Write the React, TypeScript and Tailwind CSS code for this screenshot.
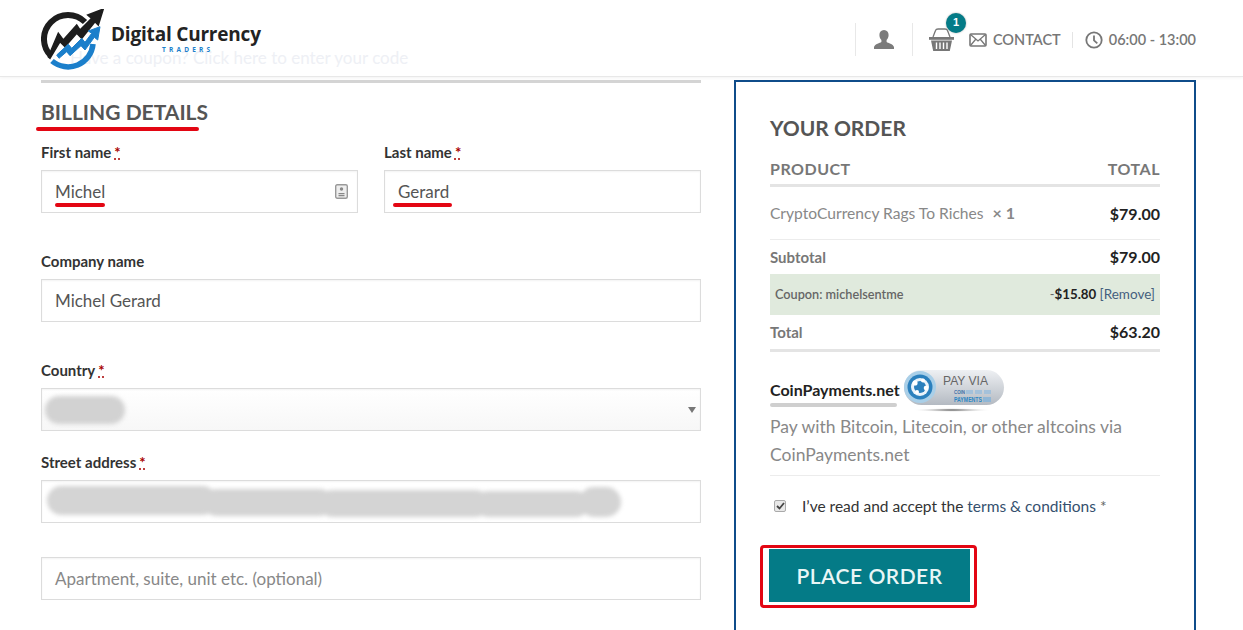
import type { ReactNode } from "react";

function Logo() {
  return (
    <div className="relative z-10 flex items-start">
      <svg width="64" height="62" viewBox="0 0 64 62" className="mt-[9px] shrink-0">
        <path d="M10 47 A24 24 0 0 1 44 13" fill="none" stroke="#1d1d1d" strokeWidth="6" />
        <path d="M7.300 47.700 17.300 24.300 22.300 31 35.700 16 39 21 50.700 9.300 46.700 6 62.300 0 57.300 16 54 12.700 40.700 29.300 35.700 24.300 24 37.700 19 32.700 9 49.300Z" fill="#1d1d1d" stroke="#1d1d1d" strokeWidth="1.500" />
        <path d="M11 52 A25 25 0 0 0 52 35" fill="none" stroke="#1b7fcb" strokeWidth="5.500" />
        <path d="M15.700 46 27.300 35.300 30.700 39.300 40.700 29.300 44 33.300 50.700 24.300 47.300 22 59 17.700 56.700 31 53.300 28.300 44 41 40 36.700 29 46.700 25.700 42.700 18 49.300Z" fill="#1b7fcb" stroke="#1b7fcb" strokeWidth="1" />
      </svg>
      <div className="ml-[6px] mt-[22px] flex flex-col">
        <span className="font-['Open_Sans',sans-serif] text-[19px] leading-[25px] font-bold tracking-[-0.2px] text-[#232323]">
          Digital Currency
        </span>
        <span className="ml-[51px] -mt-[1px] font-['Open_Sans',sans-serif] text-[6.500px] leading-[7px] font-bold tracking-[3.200px] text-[#1b7fcb]">
          TRADERS
        </span>
      </div>
    </div>
  );
}

function HeaderIcons() {
  return (
    <div className="flex items-center text-[#777]">
      <div className="h-[33px] w-px bg-[#e8e8e8]" />
      <svg width="20" height="19" viewBox="0 0 20 19" className="ml-[18px]">
        <path d="M10 0c3 0 4.600 2.200 4.600 5 0 2.200-.9 4-2 5v2c1.500 1 6.400 2 7.400 5v2H0v-2c1-3 5.900-4 7.400-5v-2c-1.100-1-2-2.800-2-5C5.400 2.200 7 0 10 0z" fill="#7b7b7b" />
      </svg>
      <div className="ml-[18px] h-[33px] w-px bg-[#e8e8e8]" />
      <div className="relative ml-[16px] h-[24px] w-[25px]">
        <svg width="25" height="24" viewBox="0 0 25 24">
          <path d="M4 9 L6.500 2.500 Q7 1 9 1 H16 Q18 1 18.500 2.500 L21 9" fill="none" stroke="#777" strokeWidth="1.300" />
          <path d="M0 9h25v2.800H0z" fill="#777" />
          <path d="M2 12.500h21L20.800 23H4.200z" fill="#777" />
          <path d="M7.500 14.500v6.500M11 14.500v6.500M14.500 14.500v6.500M18 14.500v6.500" stroke="#fff" strokeWidth="1.400" />
        </svg>
        <span className="absolute -top-[15px] left-[17px] flex h-[20px] w-[20px] items-center justify-center rounded-full bg-[#047b87] font-['Liberation_Sans',sans-serif] text-[11px] font-bold text-white shadow-[0_0_2px_rgba(0,0,0,0.35)]">
          1
        </span>
      </div>
      <svg width="18" height="14" viewBox="0 0 18 14" className="ml-[15px]">
        <rect x="1" y="1" width="16" height="12" rx="1" fill="none" stroke="#777" strokeWidth="1.600" />
        <path d="M1.500 1.500 9 8l7.500-6.500M1.500 12.500 6.500 6.500M16.500 12.500 11.500 6.500" fill="none" stroke="#777" strokeWidth="1.300" />
      </svg>
      <span className="ml-[6px] text-[14.500px] font-semibold text-[#777]">CONTACT</span>
      <div className="ml-[11px] h-[16px] w-px bg-[#e4e4e4]" />
      <svg width="18" height="18" viewBox="0 0 18 18" className="ml-[12px]">
        <circle cx="9" cy="9" r="7.700" fill="none" stroke="#777" strokeWidth="1.800" />
        <path d="M9 4.500V9.300l3.300 3" fill="none" stroke="#777" strokeWidth="1.800" />
      </svg>
      <span className="ml-[6px] text-[14.500px] font-semibold text-[#777]">06:00 - 13:00</span>
    </div>
  );
}

function Req() {
  return <span className="ml-[3px] font-bold text-[#a80000] underline decoration-dotted">*</span>;
}

function Field({
  label,
  required,
  className,
  boxClass,
  children,
}: {
  label?: string;
  required?: boolean;
  className?: string;
  boxClass?: string;
  children: ReactNode;
}) {
  return (
    <div className={className}>
      {label && (
        <div className="h-[28px] text-[15px] leading-[20px] font-bold text-[#333]">
          {label}
          {required && <Req />}
        </div>
      )}
      <div
        className={`relative flex h-[43px] items-center border border-[#dcdcdc] px-[13px] text-[17px] text-[#555] shadow-[inset_0_1px_2px_rgba(0,0,0,0.05)] ${boxClass ?? ""}`}
      >
        {children}
      </div>
    </div>
  );
}

function Underlined({ text, width }: { text: string; width: string }) {
  return (
    <span className="relative">
      {text}
      <span className={`absolute top-[24px] h-[4px] rounded-full bg-[#e30613] ${width}`} />
    </span>
  );
}

function Billing() {
  return (
    <section className="w-[660px] shrink-0 pt-[3px]">
      <div className="h-[3px] bg-[#d4d4d4]" />
      <h2 className="relative mt-[14px] text-[21px] leading-[30px] font-bold text-[#555]">
        BILLING DETAILS
        <span className="absolute top-[30px] -left-[5px] h-[4px] w-[163px] rounded-full bg-[#e30613]" />
      </h2>
      <div className="mt-[15px] flex gap-[26px]">
        <Field label="First name" required className="w-[317px]">
          <Underlined text="Michel" width="left-0 w-[50px]" />
          <svg width="13" height="15" viewBox="0 0 13 15" className="ml-auto -mr-[4px]">
            <rect x="0.700" y="0.700" width="11.600" height="13.600" rx="1.500" fill="#eee" stroke="#999" strokeWidth="1.400" />
            <circle cx="6.500" cy="5" r="1.700" fill="#888" />
            <path d="M3.500 9h6v1.200h-6zM3.500 11h6v1.200h-6z" fill="#888" />
          </svg>
        </Field>
        <Field label="Last name" required className="w-[317px]">
          <Underlined text="Gerard" width="-left-[5px] w-[59px]" />
        </Field>
      </div>
      <Field label="Company name" className="mt-[38px]">
        Michel Gerard
      </Field>
      <Field label="Country" required className="mt-[38px]" boxClass="bg-gradient-to-b from-white to-[#f7f7f7]">
        <span className="-ml-[10px] h-[28px] w-[80px] rounded-full bg-[#d2d2d2] blur-[2px]" />
        <span className="ml-auto -mr-[9px] border-x-[4px] border-t-[6px] border-x-transparent border-t-[#777]" />
      </Field>
      <Field label="Street address" required className="mt-[21px]">
        <span className="-ml-[8px] flex items-center blur-[2px]">
          <span className="mb-[3px] h-[29px] w-[170px] rounded-full bg-[#d4d4d4]" />
          <span className="-ml-[14px] mt-[1px] h-[27px] w-[130px] rounded-full bg-[#d4d4d4]" />
          <span className="-ml-[14px] mt-[3px] h-[27px] w-[170px] rounded-full bg-[#d4d4d4]" />
          <span className="-ml-[14px] mt-[4px] h-[26px] w-[114px] rounded-full bg-[#d4d4d4]" />
          <span className="-ml-[10px] h-[30px] w-[42px] rounded-full bg-[#d4d4d4]" />
        </span>
      </Field>
      <Field className="mt-[34px]">
        <span className="text-[#888]">Apartment, suite, unit etc. (optional)</span>
      </Field>
    </section>
  );
}

function PayBadge() {
  return (
    <svg width="102" height="44" viewBox="0 0 102 44" className="ml-[3px] -mt-[2px] shrink-0">
      <defs>
        <linearGradient id="pill" x1="0" y1="0" x2="0" y2="1">
          <stop offset="0" stopColor="#eef0f3" />
          <stop offset="1" stopColor="#b4bac2" />
        </linearGradient>
        <radialGradient id="shadow">
          <stop offset="0" stopColor="#444" />
          <stop offset="1" stopColor="#fff" stopOpacity="0" />
        </radialGradient>
      </defs>
      <rect x="1" y="1" width="100" height="35" rx="17.500" fill="url(#pill)" />
      <circle cx="17" cy="18" r="16" fill="#a9cfe8" />
      <circle cx="17" cy="18" r="12.500" fill="#2b80bd" />
      <circle cx="17" cy="18" r="9" fill="#eaf3fa" />
      <circle cx="17" cy="18" r="6" fill="#2b80bd" />
      <circle cx="12" cy="14" r="2.600" fill="#fff" />
      <circle cx="20" cy="11.500" r="2" fill="#fff" />
      <circle cx="23" cy="19" r="2.300" fill="#fff" />
      <circle cx="14" cy="23" r="2" fill="#fff" />
      <text x="40" y="16" fontFamily="Liberation Sans, sans-serif" fontSize="13" fill="#666" textLength="45" lengthAdjust="spacingAndGlyphs">PAY VIA</text>
      <text x="51" y="24.500" fontFamily="Liberation Sans, sans-serif" fontSize="6" fontWeight="700" fill="#3f6fa6" textLength="11" lengthAdjust="spacingAndGlyphs">COIN</text>
      <text x="51" y="33" fontFamily="Liberation Sans, sans-serif" fontSize="7" fontWeight="700" fill="#2b86c4" textLength="28" lengthAdjust="spacingAndGlyphs">PAYMENTS</text>
      <path d="M63 21h7v4h-7zM72 21h7v4h-7zM81 21h7v4h-7z" fill="#a4c1da" />
      <path d="M80 28h8v5h-8z" fill="#8fb6d6" />
      <ellipse cx="49" cy="41" rx="40" ry="2" fill="url(#shadow)" />
    </svg>
  );
}

function Order() {
  return (
    <aside className="h-[560px] w-[462px] shrink-0 border-2 border-b-0 border-[#0f4c8a] px-[34px] pt-[31px]">
      <h3 className="text-[21px] leading-[30px] font-bold text-[#555]">YOUR ORDER</h3>
      <div className="mt-[15px] flex h-[29px] justify-between border-b-[3px] border-[#e4e4e4] text-[16px] leading-[22px] font-bold tracking-[0.5px] text-[#777]">
        <span>PRODUCT</span>
        <span>TOTAL</span>
      </div>
      <div className="flex h-[53px] items-center justify-between border-b border-[#ececec] pt-[1px] text-[15.600px] text-[#888]">
        <span>
          CryptoCurrency Rags To Riches <span className="ml-[5px] text-[16px] font-bold">× 1</span>
        </span>
        <span className="text-[16px] font-bold text-[#222]">$79.00</span>
      </div>
      <div className="flex h-[34px] items-center justify-between text-[15px] font-bold text-[#777]">
        <span>Subtotal</span>
        <span className="text-[16px] text-[#222]">$79.00</span>
      </div>
      <div className="flex h-[41px] items-center justify-between bg-[#e0eadd] px-[5px] text-[12.700px] text-[#666]">
        <span className="font-semibold">Coupon: michelsentme</span>
        <span>
          -<span className="text-[13.300px] font-bold text-[#222]">$15.80</span>{" "}
          <span className="text-[13.500px] text-[#44607d]">[Remove]</span>
        </span>
      </div>
      <div className="flex h-[37px] items-center justify-between border-b-[3px] border-[#e4e4e4] text-[15px] font-bold text-[#777]">
        <span>Total</span>
        <span className="text-[16px] text-[#222]">$63.20</span>
      </div>
      <div className="mt-[19px] flex items-start">
        <div className="mt-[8px] text-[16px] leading-[22px] font-bold text-[#222]">
          CoinPayments.net
          <div className="mt-[2px] h-[4px] w-[127px] rounded-full bg-[#cfcfcf]" />
        </div>
        <PayBadge />
      </div>
      <p className="border-b border-[#ececec] pb-[6px] text-[17.500px] leading-[28px] text-[#888]">
        Pay with Bitcoin, Litecoin, or other altcoins via CoinPayments.net
      </p>
      <div className="mt-[19px] flex items-center text-[15.500px] leading-[22px] text-[#333]">
        <span className="ml-[4px] flex h-[12px] w-[12px] items-center justify-center rounded-[2px] border border-[#aaa] bg-[#e8e8e8]">
          <svg width="9" height="8" viewBox="0 0 9 8">
            <path d="M1 4l2.500 2.500L8 1" fill="none" stroke="#444" strokeWidth="1.800" />
          </svg>
        </span>
        <span className="ml-[16px]">
          I’ve read and accept the <span className="text-[#35506e]">terms &amp; conditions</span>{" "}
          <span className="text-[#666]">*</span>
        </span>
      </div>
      <div className="mt-[28px] -ml-[10px] inline-block rounded-[4px] border-[3px] border-[#e30613] pt-[1px] pr-[4px] pb-[3px] pl-[6px]">
        <button className="block h-[53px] w-[201px] bg-[#047b87] text-[21px] font-semibold tracking-[0.5px] text-[#e9f6f6]">
          PLACE ORDER
        </button>
      </div>
    </aside>
  );
}

export default function App() {
  return (
    <div className="relative isolate h-[630px] w-[1243px] overflow-hidden bg-white font-['Lato',sans-serif]">
      <header className="relative flex h-[77px] items-start justify-between border-b border-[#e8e8e8] pr-[47px] pl-[41px] shadow-[0_1px_3px_rgba(0,0,0,0.05)]">
        <Logo />
        <div className="mt-[23px]">
          <HeaderIcons />
        </div>
        <span className="absolute top-[47px] left-[70px] text-[17px] leading-[22px] text-[#eef0f5]">
          Have a coupon? Click here to enter your code
        </span>
      </header>
      <main className="flex gap-[33px] pl-[41px]">
        <Billing />
        <div className="pt-[3px]">
          <Order />
        </div>
      </main>
    </div>
  );
}
